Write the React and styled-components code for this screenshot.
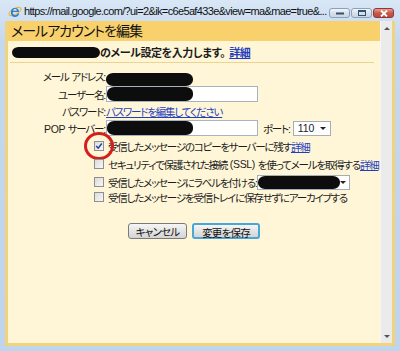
import styled, { createGlobalStyle } from "styled-components";

const GlobalStyle = createGlobalStyle`
  html, body { margin: 0; padding: 0; }
  body {
    width: 400px;
    height: 351px;
    overflow: hidden;
    background: #c6daf0;
    font-family: "Liberation Sans", "Noto Sans CJK JP", sans-serif;
    font-feature-settings: "palt";
    color: #1c1c1c;
  }
`;

const Window = styled.div`
  width: 400px;
  height: 351px;
  display: flex;
  flex-direction: column;
  background: linear-gradient(#d9e7f6, #c4d8ef 40px, #bfd4ed);
`;

const TitleBar = styled.div`
  height: 21px;
  flex-shrink: 0;
  display: flex;
  align-items: center;
  padding: 0 6px 0 8px;
  svg { flex-shrink: 0; }
`;

const TitleText = styled.span`
  margin-left: 2px;
  font-size: 11px;
  letter-spacing: -0.65px;
  white-space: nowrap;
  overflow: hidden;
  min-width: 0;
  color: #111;
`;

const Controls = styled.div`
  margin-left: auto;
  align-self: flex-start;
  margin-top: 8px;
  display: flex;
  gap: 1px;
  flex-shrink: 0;
`;

const CtrlButton = styled.div`
  width: ${({ $w }) => $w}px;
  height: 10px;
  box-sizing: border-box;
  border: 1px solid ${({ $close }) => ($close ? "#8c3a33" : "#8aa0bb")};
  border-radius: 3px;
  background: ${({ $close }) =>
    $close
      ? "linear-gradient(#e8a195, #c9574b 50%, #c04a3e)"
      : "linear-gradient(#f3f6fa, #d6e0ec 50%, #cbd7e5)"};
  display: flex;
  align-items: center;
  justify-content: center;
`;

const Client = styled.div`
  flex: 1;
  min-height: 0;
  margin: 0 5px 5px 5px;
  border: 3px solid #f1d27d;
  border-top: 0;
  display: flex;
`;

const Main = styled.div`
  flex: 1;
  display: flex;
  flex-direction: column;
  background: #fff6d8;
`;

const Header = styled.div`
  height: 20px;
  flex-shrink: 0;
  background: #f8d16c;
  font-size: 14px;
  line-height: 20px;
  padding-left: 3px;
  letter-spacing: -1px;
  color: #111;
`;

const Intro = styled.div`
  display: flex;
  align-items: center;
  height: 14px;
  margin: 4px 0 3px 4px;
  font-size: 11px;
  letter-spacing: -0.4px;
  font-weight: bold;
`;

const Divider = styled.div`
  height: 1px;
  margin: 0 6px 0 2px;
  background: #ecd38f;
`;

const Link = styled.a`
  color: #1f3fbf;
  text-decoration: underline;
  font-weight: ${({ $bold }) => ($bold ? "bold" : "normal")};
  margin-left: ${({ $gap }) => $gap || 0}px;
  cursor: pointer;
`;

const Latin = styled.span`
  letter-spacing: -0.3px;
`;

const Form = styled.div`
  display: flex;
  flex-direction: column;
  margin-top: 5px;
`;

const Row = styled.div`
  display: flex;
  align-items: center;
  height: ${({ $h }) => $h || 16}px;
  margin-top: ${({ $top }) => $top || 0}px;
  font-size: 10.5px;
  letter-spacing: -1.2px;
`;

const Label = styled.span`
  width: 97px;
  text-align: right;
  margin-right: 1px;
  white-space: pre;
`;

const Blob = styled.span`
  display: inline-block;
  width: ${({ $w }) => $w}px;
  height: ${({ $h }) => $h}px;
  margin-top: ${({ $dy }) => $dy || 0}px;
  background: #0d0d0d;
  border-radius: 7px / 6px;
  filter: blur(0.7px);
  flex-shrink: 0;
`;

const TextBox = styled.div`
  width: 152px;
  height: 16px;
  box-sizing: border-box;
  border: 1px solid #a9b3bf;
  background: #fff;
  display: flex;
  align-items: center;
`;

const Select = styled.div`
  width: ${({ $w }) => $w}px;
  height: 15px;
  box-sizing: border-box;
  border: 1px solid #a5adb8;
  background: #fff;
  display: flex;
  align-items: center;
  padding-left: ${({ $pad }) => $pad}px;
  letter-spacing: 0;
  margin-left: ${({ $gap }) => $gap || 0}px;
`;

const Caret = styled.span`
  margin-left: auto;
  margin-right: 4px;
  width: 0;
  height: 0;
  border-left: 3px solid transparent;
  border-right: 3px solid transparent;
  border-top: 3px solid #222;
`;

const PortLabel = styled.span`
  margin-left: 5px;
  margin-right: 3px;
`;

const CheckRow = styled(Row)`
  padding-left: 86px;
  white-space: nowrap;
`;

const CheckWrap = styled.span`
  position: relative;
  display: inline-flex;
  margin-right: 4px;
`;

const CheckBox = styled.span`
  width: 10px;
  height: 10px;
  box-sizing: border-box;
  border: 1px solid #8e8f8f;
  background: linear-gradient(135deg, #dcdcdc, #f7f7f7);
  display: flex;
  align-items: center;
  justify-content: center;
`;

const RedRing = styled.span`
  position: absolute;
  left: -10px;
  top: -9px;
  width: 24px;
  height: 22px;
  border: 3px solid #d4201c;
  border-radius: 50%;
`;

const Buttons = styled.div`
  display: flex;
  justify-content: center;
  gap: 5px;
  margin-top: 19px;
`;

const Button = styled.button`
  width: ${({ $w }) => $w}px;
  height: 16px;
  padding: 0;
  box-sizing: border-box;
  font-family: inherit;
  font-feature-settings: "palt";
  font-size: 10.5px;
  letter-spacing: -0.8px;
  color: #111;
  border: ${({ $focus }) => ($focus ? "2px solid #4aa6d6" : "1px solid #7a7a7a")};
  border-radius: 3px;
  background: linear-gradient(#f6f6f6, #e4e4e4 50%, #d4d4d4);
`;

const ScrollBar = styled.div`
  width: 12px;
  flex-shrink: 0;
  background: #ebebeb;
  border-left: 1px solid #f6f6f6;
  box-sizing: border-box;
  display: flex;
  flex-direction: column;
  align-items: center;
  justify-content: space-between;
  padding: 6px 0 5px;
`;

const Arrow = styled.span`
  width: 0;
  height: 0;
  border-left: 3px solid transparent;
  border-right: 3px solid transparent;
  ${({ $down }) => ($down ? "border-top: 3px solid #555;" : "border-bottom: 3px solid #555;")}
`;

const IeIcon = () => (
  <svg width="14" height="14" viewBox="0 0 14 14">
    <ellipse cx="7" cy="7.5" rx="6.6" ry="3" fill="none" stroke="#f0b429" strokeWidth="1.2" transform="rotate(-30 7 7.5)" />
    <path d="M3 8 A4 4 0 1 1 11 8 H5 A2.2 2.2 0 0 0 9.6 9.6 H11.3 A4 4 0 0 1 3 8 Z M5.1 6.7 H8.9 A1.9 1.9 0 0 0 5.1 6.7 Z" fill="#2a7fd4" fillRule="evenodd" />
  </svg>
);

const Tick = () => (
  <svg width="8" height="8" viewBox="0 0 8 8">
    <path d="M1.2 4 L3.2 6.2 L6.8 1.5" fill="none" stroke="#2140a8" strokeWidth="1.5" />
  </svg>
);

export default function App() {
  return (
    <>
      <GlobalStyle />
      <Window>
        <TitleBar>
          <IeIcon />
          <TitleText>https://mail.google.com/?ui=2&amp;ik=c6e5af433e&amp;view=ma&amp;mae=true&amp;...</TitleText>
          <Controls>
            <CtrlButton $w={21}>
              <svg width="8" height="4" viewBox="0 0 8 4"><rect x="0" y="1.5" width="8" height="2" fill="#34506f" /></svg>
            </CtrlButton>
            <CtrlButton $w={21}>
              <svg width="8" height="6" viewBox="0 0 8 6"><rect x="0.5" y="0.5" width="7" height="5" fill="none" stroke="#34506f" /><rect x="0.5" y="0.5" width="7" height="1.5" fill="#34506f" /></svg>
            </CtrlButton>
            <CtrlButton $w={21} $close>
              <svg width="8" height="7" viewBox="0 0 8 7"><path d="M1 0.5 L7 6.5 M7 0.5 L1 6.5" stroke="#fff" strokeWidth="1.8" /></svg>
            </CtrlButton>
          </Controls>
        </TitleBar>
        <Client>
          <Main>
            <Header>メールアカウントを編集</Header>
            <Intro>
              <Blob $w={88} $h={11} />
              <span>のメール設定を入力します。</span>
              <Link $bold $gap={4}>詳細</Link>
            </Intro>
            <Divider />
            <Form>
              <Row $h={17}>
                <Label>メール<Latin> </Latin>アドレス:</Label>
                <Blob $w={87} $h={13} $dy={6} />
              </Row>
              <Row $top={1}>
                <Label>ユーザー名:</Label>
                <TextBox>
                  <Blob $w={86} $h={14} />
                </TextBox>
              </Row>
              <Row $top={1}>
                <Label>パスワード:</Label>
                <Link>パスワードを編集してください</Link>
              </Row>
              <Row $top={1}>
                <Label><Latin>POP </Latin>サーバー:</Label>
                <TextBox>
                  <Blob $w={86} $h={14} />
                </TextBox>
                <PortLabel>ポート:</PortLabel>
                <Select $w={38} $pad={4}>
                  110
                  <Caret />
                </Select>
              </Row>
              <CheckRow $h={14} $top={3}>
                <CheckWrap>
                  <CheckBox><Tick /></CheckBox>
                  <RedRing />
                </CheckWrap>
                受信したメッセージのコピーをサーバーに残す
                <Link>詳細</Link>
              </CheckRow>
              <CheckRow $h={14} $top={4}>
                <CheckWrap><CheckBox /></CheckWrap>
                セキュリティで保護された接続<Latin>&nbsp;(SSL)&nbsp;</Latin>を使ってメールを取得する
                <Link>詳細</Link>
              </CheckRow>
              <CheckRow $h={14} $top={4}>
                <CheckWrap><CheckBox /></CheckWrap>
                受信したメッセージにラベルを付ける:
                <Select $w={93} $pad={0}>
                  <Blob $w={82} $h={13} />
                  <Caret />
                </Select>
              </CheckRow>
              <CheckRow $h={14} $top={1}>
                <CheckWrap><CheckBox /></CheckWrap>
                受信したメッセージを受信トレイに保存せずにアーカイブする
              </CheckRow>
            </Form>
            <Buttons>
              <Button $w={59}>キャンセル</Button>
              <Button $w={68} $focus>変更を保存</Button>
            </Buttons>
          </Main>
          <ScrollBar>
            <Arrow />
            <Arrow $down />
          </ScrollBar>
        </Client>
      </Window>
    </>
  );
}
